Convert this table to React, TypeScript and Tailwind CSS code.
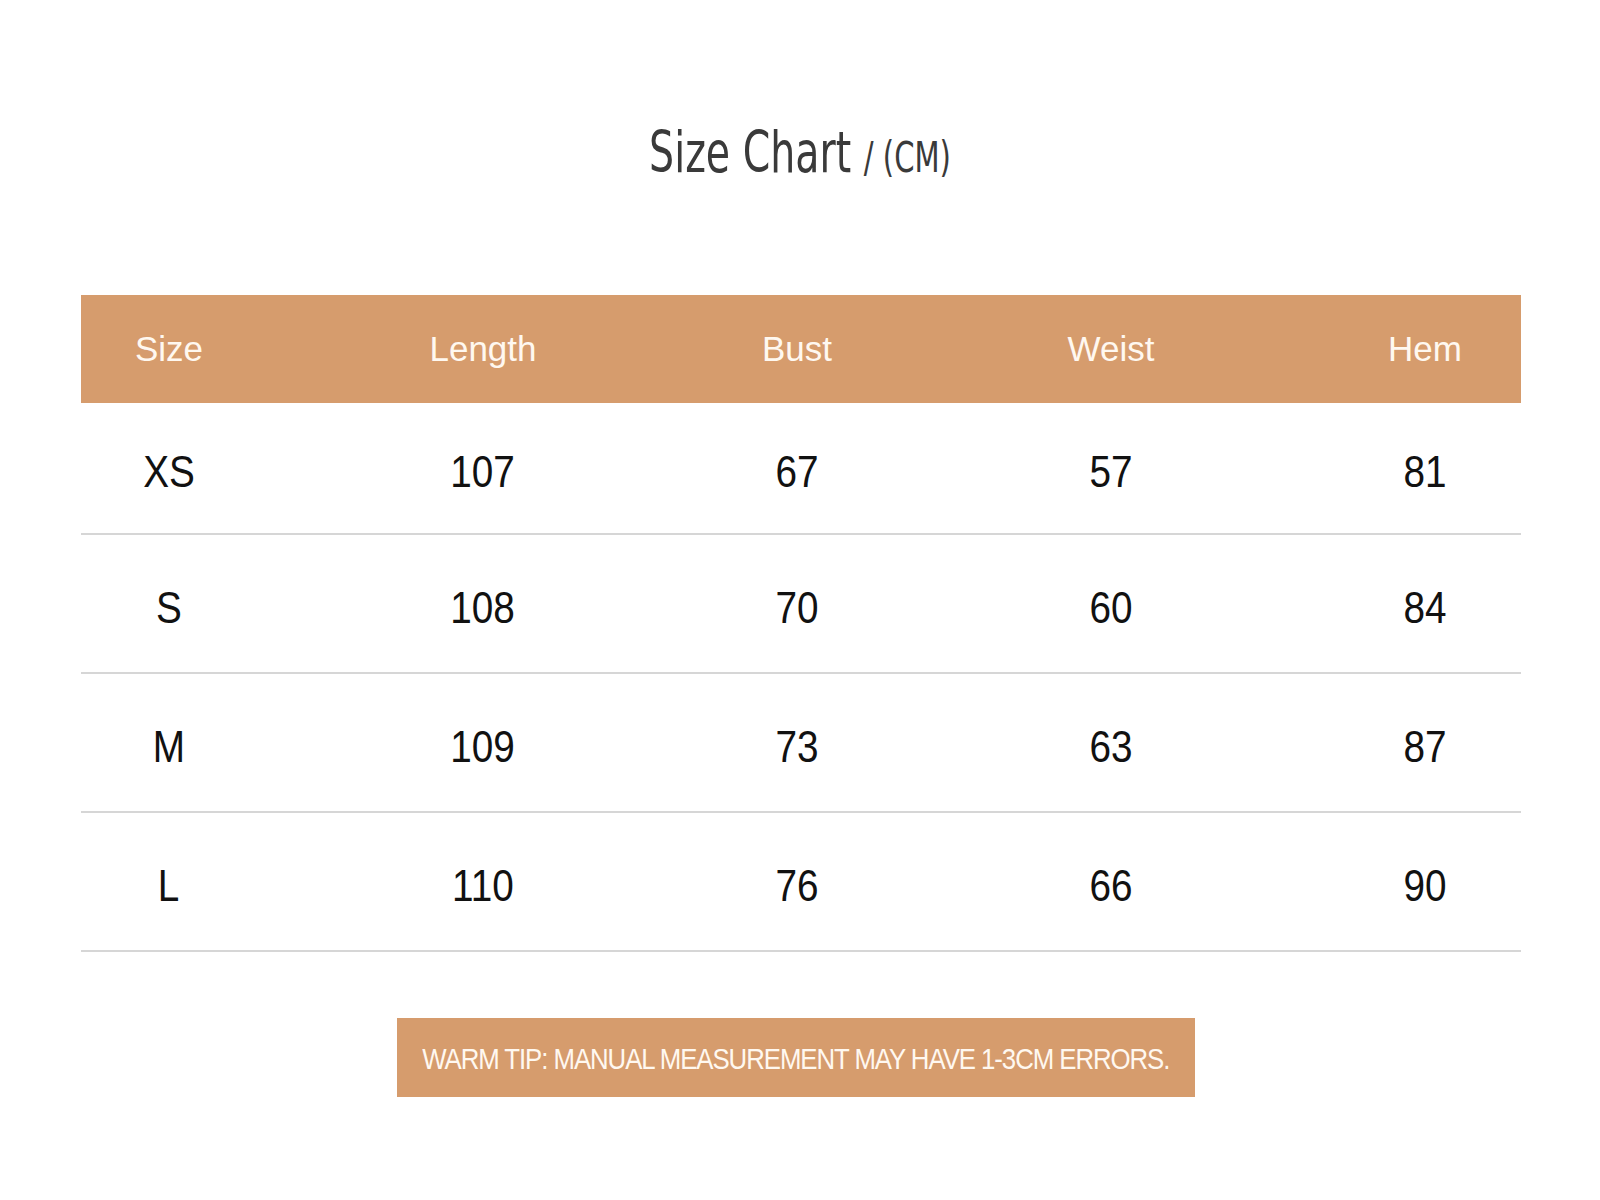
import React from "react";

const rows = [
  ["XS", "107", "67", "57", "81"],
  ["S", "108", "70", "60", "84"],
  ["M", "109", "73", "63", "87"],
  ["L", "110", "76", "66", "90"],
];

const heads = ["Size", "Length", "Bust", "Weist", "Hem"];

const App = () => {
  return (
    <div className="w-[1600px] h-[1200px] bg-white">
      <div className="h-[295px] pt-[124px] flex justify-center">
        <h1 className="inline-block whitespace-nowrap scale-x-[0.77] text-[57px] leading-none text-[#3a3a3a] font-['DejaVu_Sans_Condensed','Liberation_Sans',sans-serif]">
          Size Chart <span className="text-[42px]">/ (CM)</span>
        </h1>
      </div>

      <div className="ml-[81px] w-[1440px]">
        <div className="h-[108px] bg-[#d69c6d] pr-[8px] flex justify-between items-center text-[35px] text-[#fff8f0] font-['Liberation_Sans',Arial,sans-serif]">
          {heads.map((h) => (
            <div key={h} className="w-[176px] text-center">
              {h}
            </div>
          ))}
        </div>

        {rows.map((r, i) => (
          <div
            key={r[0]}
            className={
              (i === 0 ? "h-[132px] " : "h-[139px] ") +
              "border-b-2 border-[#d6d6d6] pt-[8px] pr-[8px] flex justify-between items-center text-[45px] text-[#111] font-['Liberation_Sans',Arial,sans-serif]"
            }
          >
            {r.map((c, j) => (
              <div key={j} className="w-[176px] flex justify-center">
                <span className="inline-block scale-x-[0.86]">{c}</span>
              </div>
            ))}
          </div>
        ))}
      </div>

      <div className="mt-[66px] ml-[397px] w-[798px] h-[79px] bg-[#d69c6d] flex items-center justify-center">
        <p className="whitespace-nowrap scale-x-[0.89] pt-[4px] text-[29px] tracking-[-1.2px] text-[#fff8f0] font-['Liberation_Sans',Arial,sans-serif]">
          WARM TIP: MANUAL MEASUREMENT MAY HAVE 1-3CM ERRORS.
        </p>
      </div>
    </div>
  );
};

export default App;
